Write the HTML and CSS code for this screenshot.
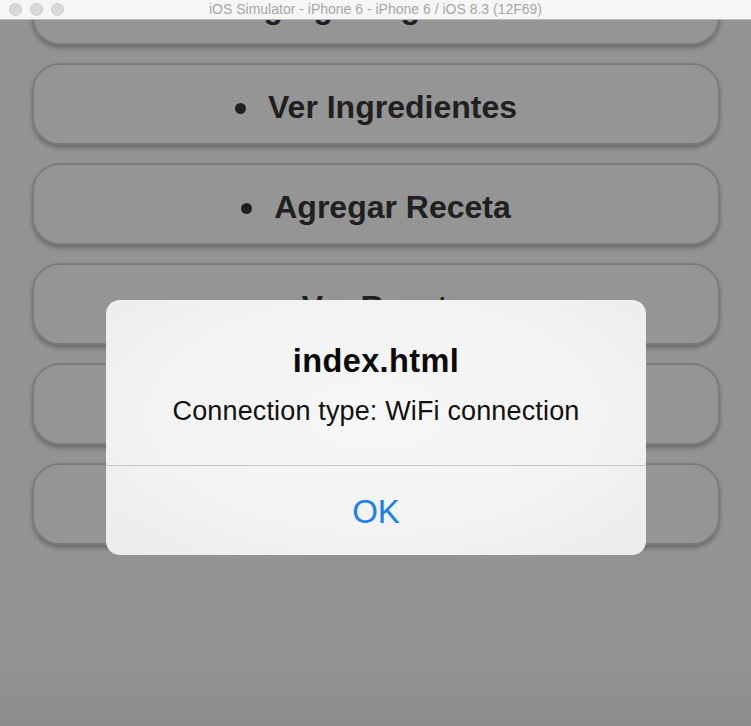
FILE: index.html
```html
<!DOCTYPE html>
<html lang="es">
<head>
<meta charset="utf-8">
<title>iOS Simulator</title>
<link rel="stylesheet" href="styles.css">
</head>
<body>
<div class="window">
  <header class="titlebar">
    <div class="lights">
      <span class="light"></span>
      <span class="light"></span>
      <span class="light"></span>
    </div>
    <div class="wintitle">iOS Simulator - iPhone 6 - iPhone 6 / iOS 8.3 (12F69)</div>
  </header>
  <main class="screen">
    <ul class="menu">
      <li class="menu-btn"><span class="label">Agregar Ingrediente</span></li>
      <li class="menu-btn"><span class="label">Ver Ingredientes</span></li>
      <li class="menu-btn"><span class="label">Agregar Receta</span></li>
      <li class="menu-btn"><span class="label">Ver Recetas</span></li>
      <li class="menu-btn"><span class="label">Buscar Receta</span></li>
      <li class="menu-btn"><span class="label">Salir</span></li>
    </ul>
    <div class="alert">
      <div class="alert-body">
        <div class="alert-title">index.html</div>
        <div class="alert-msg">Connection type: WiFi connection</div>
      </div>
      <div class="alert-action">OK</div>
    </div>
  </main>
</div>
</body>
</html>
```
FILE: styles.css
```css
html, body {
  margin: 0;
  padding: 0;
  background: #939393;
}
body {
  font-family: "Liberation Sans", Arial, sans-serif;
  width: 751px;
  height: 726px;
  overflow: hidden;
}
.window {
  display: flex;
  flex-direction: column;
  height: 726px;
}
.titlebar {
  position: relative;
  height: 19px;
  flex: 0 0 19px;
  background: #f6f6f6;
  border-bottom: 1px solid #b9b9b9;
  display: flex;
  align-items: center;
  justify-content: center;
  z-index: 2;
}
.lights {
  position: absolute;
  left: 9px;
  top: 3px;
  display: flex;
  gap: 8px;
}
.light {
  width: 11px;
  height: 11px;
  border-radius: 50%;
  background: #d9d9d9;
  border: 0.5px solid #cdcdcd;
}
.wintitle {
  font-size: 14px;
  color: #a6a6a6;
  line-height: 19px;
  letter-spacing: 0;
}
.screen {
  position: relative;
  flex: 1;
  overflow: hidden;
  background: linear-gradient(to bottom, #939393 0%, #939393 88%, #8d8d8d 100%);
}
.menu {
  list-style: none;
  margin: -57px 0 0 0;
  padding: 0 31px 0 32px;
  display: flex;
  flex-direction: column;
  gap: 18px;
}
.menu-btn {
  box-sizing: border-box;
  height: 82px;
  border: 2px solid #7d7d7d;
  border-radius: 28px;
  background: #959595;
  box-shadow: 0 3px 4px rgba(0, 0, 0, 0.28);
  display: flex;
  align-items: center;
  justify-content: center;
  padding-top: 6px;
}
.label {
  display: inline-flex;
  align-items: center;
  font-size: 32px;
  font-weight: bold;
  color: #202020;
  letter-spacing: 0;
}
.label::before {
  content: "";
  width: 11px;
  height: 11px;
  border-radius: 50%;
  background: #202020;
  margin-right: 22px;
  margin-top: 2px;
}
.alert {
  position: absolute;
  left: 106px;
  top: 280px;
  width: 540px;
  height: 255px;
  border-radius: 14px;
  overflow: hidden;
  background: radial-gradient(ellipse at 50% 45%, #f7f7f7 0%, #f3f3f3 55%, #ececec 100%);
  display: flex;
  flex-direction: column;
  text-align: center;
}
.alert-body {
  box-sizing: border-box;
  height: 168px;
  padding-top: 41px;
  border-bottom: 1px solid #c4c4c4;
}
.alert-title {
  font-size: 32.5px;
  font-weight: bold;
  line-height: 40px;
  color: #0a0a0a;
  letter-spacing: 0.4px;
}
.alert-msg {
  margin-top: 13px;
  font-size: 27px;
  line-height: 34px;
  color: #111;
  letter-spacing: 0.15px;
}
.alert-action {
  flex: 1;
  font-size: 33px;
  line-height: 86px;
  padding-top: 3px;
  box-sizing: border-box;
  color: #1b7df3;
}
```
